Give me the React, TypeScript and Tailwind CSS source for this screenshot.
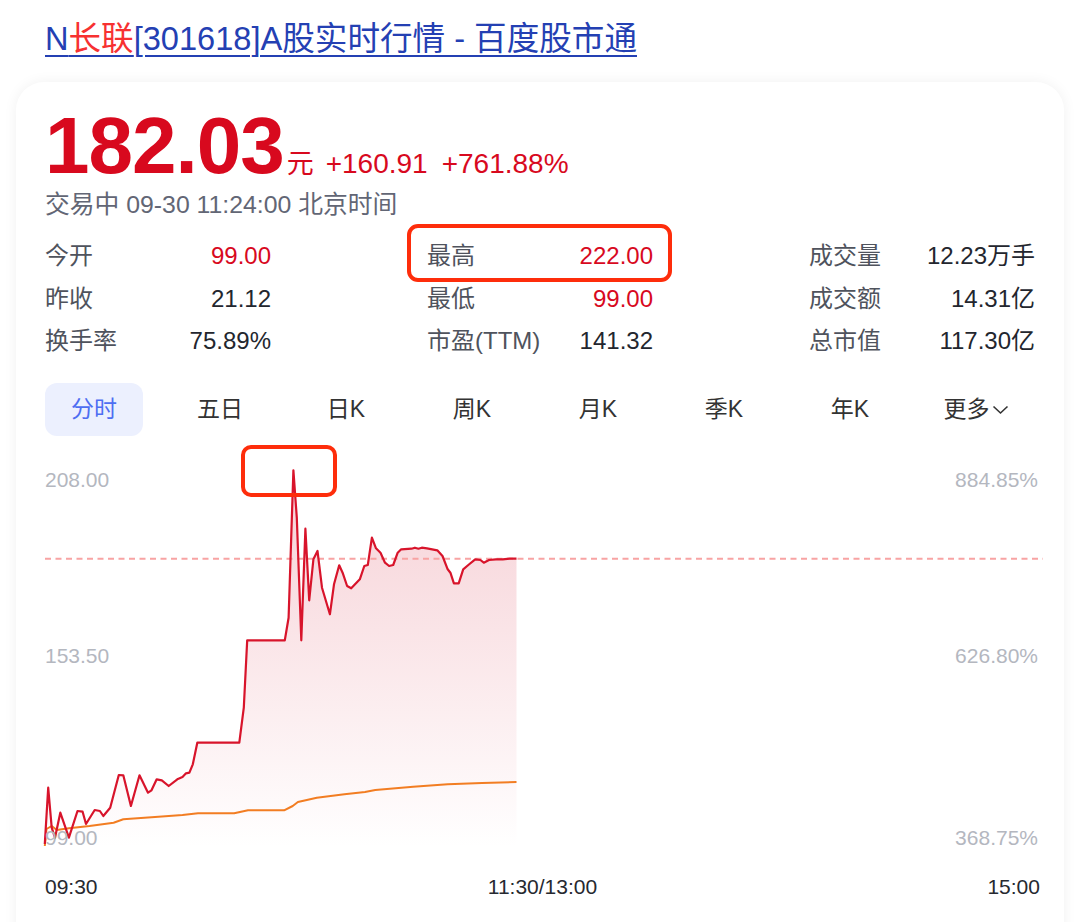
import React from 'react';

const FONT = '"Liberation Sans", "Noto Sans CJK SC", sans-serif';

// price line traced in page coordinates
const pricePts: [number, number][] = [
  [44.8, 843], [48.2, 786.7], [51.7, 826.7], [55, 836.7], [60.3, 811.7], [68.9, 836.7],
  [77.5, 810], [82.6, 810.7], [86, 823], [94.7, 809], [99.9, 810], [103.3, 815],
  [110.2, 806.7], [118.8, 774], [123.3, 774.3], [130.9, 805], [139.5, 774.3], [148, 791.7],
  [151.5, 789.3], [156.7, 778.3], [161.8, 779.3], [168.7, 785], [177.3, 778.3], [182.5, 776],
  [186, 772.3], [189.4, 771.7], [192.8, 763.3], [197.3, 741.7], [239.3, 741.7], [243.8, 706.7],
  [247.2, 639.3], [284.8, 639.3], [288.6, 616.7], [293.4, 469.3], [296.8, 516.7], [301.3, 639.3],
  [305.4, 527.7], [309.2, 599.3], [313.4, 558.3], [317.5, 550], [322, 586.7], [329.9, 613.3],
  [334, 583.3], [339.2, 564.3], [342.6, 571.7], [347.1, 585], [351.2, 587.3], [359.8, 578.3],
  [364.3, 565], [367.8, 564], [371.9, 536.7], [376, 547.3], [380.5, 551.7], [385, 561.7],
  [389.1, 565], [393.2, 564], [397.7, 551.7], [401.2, 548.3], [411.5, 547.7], [414.9, 546.7],
  [418.4, 547.7], [421.8, 546.7], [427, 547.3], [437.3, 549.3], [442.5, 555], [447.7, 568.3],
  [450.4, 571.7], [453.9, 582.3], [458.7, 582.3], [463.2, 568.3], [468.3, 564], [475.2, 558.3],
  [480.4, 559], [483.8, 561.7], [489, 559], [495.9, 558.3], [502.8, 558.3], [509.6, 557.7],
  [516.5, 557.7],
];

const avgPts: [number, number][] = [
  [44.8, 845], [46.5, 828], [51.7, 825], [56.8, 829], [68.9, 827.3], [89.5, 825],
  [113.6, 821.7], [123.3, 818.3], [155, 816], [182.5, 814], [198, 812.3], [234.2, 812.3],
  [248, 809.3], [284.1, 809.3], [292.7, 805], [297.9, 801], [316.8, 796.7], [344.4, 793.3],
  [365, 791], [375.3, 789], [413.2, 785.7], [447.7, 783.3], [482, 782], [516.5, 781],
];

const toLocal = (pts: [number, number][]) =>
  pts.map(([x, y]) => `${(x - 45).toFixed(1)},${(y - 455).toFixed(1)}`).join(' ');

const stats = [
  [
    { label: '今开', value: '99.00', red: true },
    { label: '昨收', value: '21.12' },
    { label: '换手率', value: '75.89%' },
  ],
  [
    { label: '最高', value: '222.00', red: true },
    { label: '最低', value: '99.00', red: true },
    { label: '市盈(TTM)', value: '141.32' },
  ],
  [
    { label: '成交量', value: '12.23万手' },
    { label: '成交额', value: '14.31亿' },
    { label: '总市值', value: '117.30亿' },
  ],
];

const tabs = ['分时', '五日', '日K', '周K', '月K', '季K', '年K'];

function Chart() {
  const line = toLocal(pricePts);
  const area = `0,390 ${line} ${(516.5 - 45).toFixed(1)},390`;
  return (
    <svg width="998" height="400" viewBox="0 0 998 400" className="block overflow-visible">
      <defs>
        <linearGradient id="fill" x1="0" y1="13" x2="0" y2="390" gradientUnits="userSpaceOnUse">
          <stop offset="0" stopColor="#f5c9cf" stopOpacity="0.85" />
          <stop offset="1" stopColor="#ffffff" stopOpacity="0.9" />
        </linearGradient>
      </defs>
      <polygon points={area} fill="url(#fill)" />
      <line x1="0" y1="102.7" x2="998" y2="102.7" stroke="#f8a3a3" strokeWidth="2" strokeDasharray="6 4.5" />
      <polyline points={toLocal(avgPts)} fill="none" stroke="#f27d22" strokeWidth="2" strokeLinejoin="round" />
      <polyline points={line} fill="none" stroke="#d8142b" strokeWidth="2.2" strokeLinejoin="round" />
      <g fill="#b4b7bf" fontSize="21" fontFamily={FONT}>
        <text x="0" y="31">208.00</text>
        <text x="0" y="207">153.50</text>
        <text x="0" y="389">99.00</text>
        <text x="993" y="31" textAnchor="end">884.85%</text>
        <text x="993" y="207" textAnchor="end">626.80%</text>
        <text x="993" y="389" textAnchor="end">368.75%</text>
      </g>
    </svg>
  );
}

export default function App() {
  return (
    <div className="w-[1080px] h-[922px] overflow-hidden bg-white" style={{ fontFamily: FONT }}>
      <div className="pl-[45px] pt-[19px]">
        <a className="text-[32.6px] leading-[40px] text-[#2440b3] underline underline-offset-[5px] decoration-[2px]">
          N<span className="text-[#f73131]">长联</span>[301618]A股实时行情 - 百度股市通
        </a>
      </div>

      <div className="relative mx-[16px] mt-[23px] h-[900px] rounded-[28px] bg-white px-[29px] pt-[24px] shadow-[0_0_14px_rgba(0,0,0,0.06)]">
        <div className="flex items-baseline leading-none text-[#d8091e]">
          <span className="text-[80px] font-bold tracking-[-1px]">182.03</span>
          <span className="ml-[3px] text-[27px]">元</span>
          <span className="ml-[12px] text-[28px]">+160.91</span>
          <span className="ml-[14px] text-[28px]">+761.88%</span>
        </div>
        <div className="mt-[3px] text-[24.8px] leading-[32px] text-[#626675]">交易中 09-30 11:24:00 北京时间</div>

        <div className="mt-[14px] grid grid-cols-3 gap-x-[156px] text-[24px] leading-[42.5px]">
          {stats.map((col, i) => (
            <div key={i} className="flex flex-col">
              {col.map((s) => (
                <div key={s.label} className="flex justify-between">
                  <span className="text-[#4f535d]">{s.label}</span>
                  <span className={s.red ? 'text-[#d8091e]' : 'text-[#23262e]'}>{s.value}</span>
                </div>
              ))}
            </div>
          ))}
        </div>

        <div className="mt-[20px] flex gap-[28px] text-[23px] text-[#333333]">
          {tabs.map((t, i) => (
            <div
              key={t}
              className={
                i === 0
                  ? 'flex h-[53px] w-[98px] items-center justify-center rounded-[12px] bg-[#ecf0fe] text-[#4e6ef2]'
                  : 'flex h-[53px] w-[98px] items-center justify-center'
              }
            >
              {t}
            </div>
          ))}
          <div className="flex h-[53px] w-[98px] items-center justify-center">
            更多
            <svg width="17" height="10" viewBox="0 0 17 10" className="ml-[2px] mt-[2px]">
              <path d="M1.5 1.5 L8.5 8 L15.5 1.5" fill="none" stroke="#333" strokeWidth="1.6" />
            </svg>
          </div>
        </div>

        <div className="mt-[20px]">
          <Chart />
        </div>

        <div className="mt-[16px] flex w-[995px] justify-between text-[21px] leading-[30px] text-[#262930]">
          <span>09:30</span>
          <span>11:30/13:00</span>
          <span>15:00</span>
        </div>

        {/* annotation boxes */}
        <div className="absolute left-[391px] top-[142px] h-[58px] w-[265px] rounded-[11px] border-[4px] border-[#fe2d0b]" />
        <div className="absolute left-[225px] top-[363px] h-[52px] w-[96px] rounded-[10px] border-[4px] border-[#fe2d0b]" />
      </div>
    </div>
  );
}
